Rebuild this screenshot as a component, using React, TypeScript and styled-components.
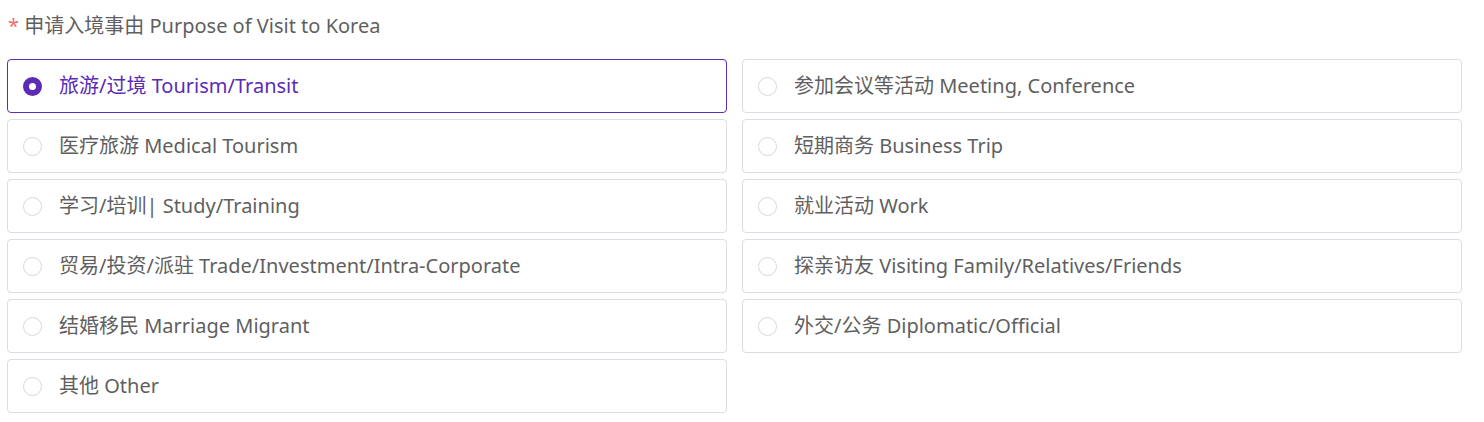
import React, { useState } from 'react';
import styled, { createGlobalStyle } from 'styled-components';

const options = [
    '旅游/过境 Tourism/Transit',
    '参加会议等活动 Meeting, Conference',
    '医疗旅游 Medical Tourism',
    '短期商务 Business Trip',
    '学习/培训| Study/Training',
    '就业活动 Work',
    '贸易/投资/派驻 Trade/Investment/Intra-Corporate',
    '探亲访友 Visiting Family/Relatives/Friends',
    '结婚移民 Marriage Migrant',
    '外交/公务 Diplomatic/Official',
    '其他 Other',
];

function App() {
    const [selected, setSelected] = useState(0);

    return (
        <>
        <GlobalStyle />
        <Wrapper>
            <Label>
                <Star>*</Star> 申请入境事由 Purpose of Visit to Korea
            </Label>
            <Grid>
                {options.map((text, i) => (
                    <Option key={text} active={i === selected} onClick={() => setSelected(i)}>
                        <Radio active={i === selected} />
                        <OptionText>{text}</OptionText>
                    </Option>
                ))}
            </Grid>
        </Wrapper>
        </>
    )
}

const GlobalStyle = createGlobalStyle`
    body {
        margin: 0;
        background: #fff;
        font-family: 'Noto Sans', 'Noto Sans CJK SC', sans-serif;
    }
`

const Wrapper = styled.div`
    width: 1455px;
    padding: 11px 0 0 7px;
`

const Label = styled.div`
    font-size: 20px;
    line-height: 30px;
    color: #5f5f5f;
    padding-left: 1px;
`

const Star = styled.span`
    color: #f56c6c;
`

const Grid = styled.div`
    display: grid;
    grid-template-columns: 720px 720px;
    column-gap: 15px;
    row-gap: 6px;
    margin-top: 18px;
`

const Option = styled.div<{active: boolean}>`
    display: flex;
    align-items: center;
    box-sizing: border-box;
    height: 54px;
    padding-left: 15px;
    border: 1px solid ${props => props.active ? '#5b2bb5' : '#dedce3'};
    border-radius: 4px;
    cursor: pointer;
    color: ${props => props.active ? '#5b2bb5' : '#5f5f5f'};
`

const Radio = styled.span<{active: boolean}>`
    box-sizing: border-box;
    width: 19px;
    height: 19px;
    border-radius: 50%;
    flex-shrink: 0;
    background: #fff;
    border: ${props => props.active ? '6px solid #5b2bb5' : '1px solid #d9d7e0'};
`

const OptionText = styled.span`
    margin-left: 17px;
    font-size: 20px;
    line-height: 28px;
`

export default App;
